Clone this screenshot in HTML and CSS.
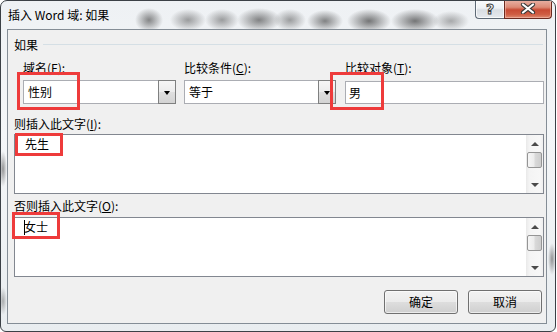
FILE: index.html
```html
<!DOCTYPE html>
<html lang="zh-CN">
<head>
<meta charset="utf-8">
<title>插入 Word 域: 如果</title>
<link rel="stylesheet" href="styles.css">
</head>
<body>
<div class="window">
  <div class="titlebar">
    <span class="title">插入 Word 域: 如果</span>
    <div class="caption">
      <div class="cbtn help"><span class="q">?</span></div>
      <div class="cbtn close">
        <svg width="16" height="11" viewBox="0 0 16 11">
          <path d="M3 1.5 L13 9.5 M13 1.5 L3 9.5" stroke="#3a3a3a" stroke-width="4.2" stroke-linecap="round" fill="none"/>
          <path d="M3 1.5 L13 9.5 M13 1.5 L3 9.5" stroke="#ffffff" stroke-width="2.2" stroke-linecap="round" fill="none"/>
        </svg>
      </div>
    </div>
  </div>
  <div class="client">
    <div class="group-head"><span>如果</span><span class="rule"></span></div>
    <div class="fields">
      <div class="field f1">
        <span class="lbl">域名(<u>F</u>):</span>
        <div class="combo"><span class="val">性别</span><span class="drop"><i class="tri-down"></i></span></div>
      </div>
      <div class="field f2">
        <span class="lbl">比较条件(<u>C</u>):</span>
        <div class="combo"><span class="val">等于</span><span class="drop"><i class="tri-down"></i></span></div>
      </div>
      <div class="field f3">
        <span class="lbl">比较对象(<u>T</u>):</span>
        <div class="edit">男</div>
      </div>
    </div>
    <div class="label l1">则插入此文字(<u>I</u>):</div>
    <div class="memo">
      <div class="text">先生</div>
      <div class="vscroll">
        <div class="sbtn"><i class="tri-up"></i></div>
        <div class="thumb"></div>
        <div class="track"></div>
        <div class="sbtn"><i class="tri-dn"></i></div>
      </div>
    </div>
    <div class="label l2">否则插入此文字(<u>O</u>):</div>
    <div class="memo m2">
      <div class="text"><span class="caret"></span>女士</div>
      <div class="vscroll">
        <div class="sbtn"><i class="tri-up"></i></div>
        <div class="thumb"></div>
        <div class="track"></div>
        <div class="sbtn"><i class="tri-dn"></i></div>
      </div>
    </div>
    <div class="buttons">
      <button class="btn">确定</button>
      <button class="btn">取消</button>
    </div>
  </div>
</div>
<div class="mark mk1"></div>
<div class="mark mk2"></div>
<div class="mark mk3"></div>
<div class="mark mk4"></div>
</body>
</html>
```
FILE: styles.css
```css
html, body {
  margin: 0;
  padding: 0;
}
body {
  position: relative;
  width: 557px;
  height: 332px;
  background: #ffffff;
  font-family: "Noto Sans CJK SC", "Noto Sans", "Liberation Sans", sans-serif;
  font-size: 12px;
  color: #000;
  overflow: hidden;
}
.window {
  box-sizing: border-box;
  width: 556px;
  height: 332px;
  border: 1px solid #3b4046;
  border-radius: 7px 7px 6px 6px;
  padding: 0 8px 7px 6px;
  display: flex;
  flex-direction: column;
  overflow: hidden;
  background:
    radial-gradient(ellipse 14px 12px at 148px 19px, rgba(60,60,60,.6), rgba(60,60,60,0)),
    radial-gradient(ellipse 18px 11px at 187px 19px, rgba(70,70,70,.5), rgba(70,70,70,0)),
    radial-gradient(ellipse 17px 11px at 221px 19px, rgba(70,70,70,.5), rgba(70,70,70,0)),
    radial-gradient(ellipse 22px 12px at 258px 19px, rgba(55,55,55,.6), rgba(55,55,55,0)),
    radial-gradient(ellipse 16px 11px at 289px 19px, rgba(70,70,70,.5), rgba(70,70,70,0)),
    radial-gradient(ellipse 18px 11px at 324px 20px, rgba(55,55,55,.6), rgba(55,55,55,0)),
    radial-gradient(ellipse 22px 12px at 368px 20px, rgba(50,50,50,.65), rgba(50,50,50,0)),
    radial-gradient(ellipse 24px 12px at 414px 20px, rgba(50,50,50,.65), rgba(50,50,50,0)),
    radial-gradient(ellipse 18px 10px at 450px 20px, rgba(80,80,80,.45), rgba(80,80,80,0)),
    radial-gradient(ellipse 4px 18px at 2px 168px, rgba(70,70,70,.55), rgba(70,70,70,0)),
    radial-gradient(ellipse 4px 14px at 2px 300px, rgba(90,90,90,.45), rgba(90,90,90,0)),
    radial-gradient(ellipse 4px 16px at 551px 258px, rgba(70,70,70,.55), rgba(70,70,70,0)),
    linear-gradient(180deg, #eef1f4 0%, #f4f6f8 40%, #e9edf0 100%);
}
.titlebar {
  height: 28px;
  flex: none;
  display: flex;
  align-items: flex-start;
}
.title {
  margin: 6px 0 0 1px;
  line-height: 16px;
  height: 16px;
  white-space: nowrap;
}
.caption {
  margin-left: auto;
  margin-right: -5px;
  margin-top: -1px;
  display: flex;
}
.cbtn {
  box-sizing: border-box;
  height: 19px;
  border: 1px solid #5e6a76;
  border-top: none;
  display: flex;
  align-items: center;
  justify-content: center;
}
.help {
  width: 29px;
  border-radius: 0 0 0 4px;
  border-right: none;
  background: linear-gradient(180deg, #fbfcfd 0%, #eef1f4 45%, #d9dee3 55%, #e6eaee 100%);
  box-shadow: inset 0 0 0 1px rgba(255,255,255,.7);
}
.help .q {
  font-family: "DejaVu Sans", sans-serif;
  font-weight: bold;
  font-size: 14px;
  line-height: 16px;
  color: #ffffff;
  -webkit-text-stroke: 1px #3c3c3c;
  margin-top: -1px;
}
.close {
  width: 48px;
  border-radius: 0 0 4px 0;
  border-color: #6b2a20;
  background: linear-gradient(180deg, #e9b3a6 0%, #dc8a76 40%, #c84a33 55%, #cf5d43 80%, #dd8a70 100%);
  box-shadow: inset 0 0 0 1px rgba(255,210,200,.45);
}
.close svg {
  display: block;
  margin-top: -1px;
}
.client {
  flex: 1;
  box-sizing: border-box;
  border: 1px solid #848d96;
  background: #f0f0f0;
  display: flex;
  flex-direction: column;
}
.group-head {
  margin-top: 7px;
  height: 16px;
  line-height: 16px;
  display: flex;
  align-items: center;
  padding: 0 3px 0 6px;
}
.group-head .rule {
  flex: 1;
  height: 1px;
  background: #d5dfe5;
  margin-left: 5px;
  margin-top: -2px;
}
.fields {
  margin-top: 7px;
  padding-left: 15px;
  display: flex;
}
.field {
  display: flex;
  flex-direction: column;
}
.f1 { width: 153px; }
.f2 { width: 152px; margin-left: 8px; }
.f3 { width: 199px; margin-left: 9px; }
.lbl {
  height: 16px;
  line-height: 16px;
  margin-bottom: 4px;
  white-space: nowrap;
}
.combo {
  box-sizing: border-box;
  height: 24px;
  border: 1px solid #abadb3;
  background: #fff;
  display: flex;
}
.combo .val {
  flex: 1;
  padding-left: 4px;
  line-height: 22px;
}
.drop {
  box-sizing: border-box;
  width: 18px;
  height: 24px;
  margin: -1px -1px -1px 0;
  border: 1px solid #7f8080;
  background: linear-gradient(180deg, #f6f6f6 0%, #ececec 50%, #dfdfdf 51%, #d3d3d3 100%);
  display: flex;
  align-items: center;
  justify-content: center;
}
.tri-down {
  width: 0;
  height: 0;
  border-left: 3px solid transparent;
  border-right: 3px solid transparent;
  border-top: 4px solid #000;
  margin-top: 1px;
}
.edit {
  box-sizing: border-box;
  height: 23px;
  margin-top: 1px;
  border: 1px solid #abadb3;
  background: #fff;
  padding-left: 3px;
  line-height: 21px;
}
.label {
  height: 16px;
  line-height: 16px;
  padding-left: 6px;
}
.l1 { margin-top: 12px; }
.l2 { margin-top: 4px; }
.memo {
  box-sizing: border-box;
  margin-left: 6px;
  margin-top: 2px;
  width: 530px;
  height: 60px;
  border: 1px solid #828790;
  background: #fff;
  display: flex;
}
.m2 { margin-top: 3px; }
.memo .text {
  flex: 1;
  padding: 1px 10px;
  line-height: 16px;
  display: flex;
  align-items: flex-start;
  height: 16px;
}
.caret {
  display: inline-block;
  width: 1px;
  height: 15px;
  background: #000;
  margin: 1px -1px 0 -1px;
}
.vscroll {
  width: 17px;
  display: flex;
  flex-direction: column;
  background: linear-gradient(90deg, #e9e9e9 0%, #f4f4f4 20%, #f7f7f7 80%, #efefef 100%);
}
.sbtn {
  height: 17px;
  display: flex;
  align-items: center;
  justify-content: center;
}
.tri-up {
  width: 0;
  height: 0;
  border-left: 4px solid transparent;
  border-right: 4px solid transparent;
  border-bottom: 4px solid #4a4a4a;
}
.tri-dn {
  width: 0;
  height: 0;
  border-left: 4px solid transparent;
  border-right: 4px solid transparent;
  border-top: 4px solid #4a4a4a;
}
.thumb {
  box-sizing: border-box;
  height: 16px;
  margin: 0 1px;
  border: 1px solid #959595;
  border-radius: 2px;
  background: linear-gradient(90deg, #f6f6f6 0%, #ececec 45%, #d9d9d9 55%, #cdcdcd 100%);
}
.track { flex: 1; }
.buttons {
  margin-top: 13px;
  padding-right: 4px;
  display: flex;
  justify-content: flex-end;
  gap: 10px;
}
.btn {
  box-sizing: border-box;
  width: 74px;
  height: 24px;
  padding: 0;
  border: 1px solid #707070;
  border-radius: 3px;
  background: linear-gradient(180deg, #f2f2f2 0%, #ebebeb 48%, #dddddd 52%, #cfcfcf 100%);
  box-shadow: inset 0 0 0 1px rgba(255,255,255,.6);
  font-family: "Noto Sans CJK SC", "Noto Sans", sans-serif;
  font-size: 12px;
  color: #000;
  line-height: 22px;
}
.mark {
  position: absolute;
  box-sizing: border-box;
  border: 3px solid #ee3b3b;
}
.mk1 { left: 17px; top: 72px; width: 63px; height: 38px; }
.mk2 { left: 15px; top: 133px; width: 48px; height: 23px; }
.mk3 { left: 330px; top: 72px; width: 54px; height: 38px; }
.mk4 { left: 12px; top: 212px; width: 48px; height: 27px; }
```
